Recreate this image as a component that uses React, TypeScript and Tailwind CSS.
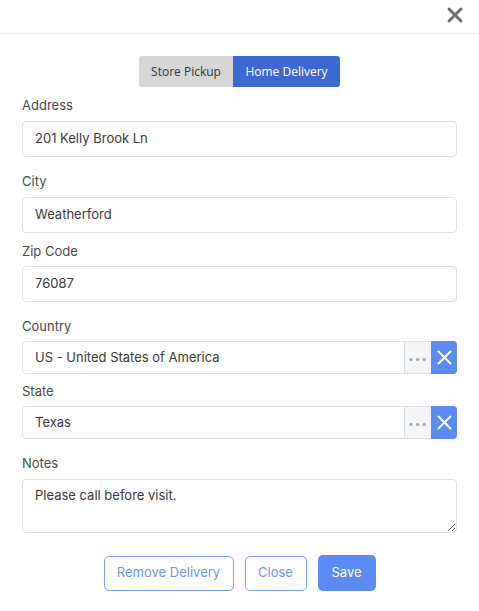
import { X } from "lucide-react"

const FONT = { fontFamily: "Inter, 'Noto Sans', sans-serif" }

function Label({ children }: { children: React.ReactNode }) {
  return <div className="text-[13px] leading-[18px] text-[#4a4a4a]">{children}</div>
}

function TextField({ value }: { value: string }) {
  return (
    <div className="flex h-[36px] items-center rounded-[4px] border border-[#dde0e6] bg-white px-[12px] text-[13px] text-[#3a3a3a]">
      {value}
    </div>
  )
}

function LookupField({ value }: { value: string }) {
  return (
    <div className="flex h-[33px] items-stretch rounded-[4px] border border-[#dde0e6] bg-white">
      <div className="flex flex-1 items-center px-[12px] text-[13px] text-[#3a3a3a]">{value}</div>
      <div className="flex w-[27px] items-center justify-center border-l border-[#dde0e6] bg-[#f4f5f7] text-[#a0a4ab]">
        <span className="text-[10px] leading-none tracking-[1px]">•••</span>
      </div>
      <button className="-my-px -mr-px flex w-[26px] items-center justify-center rounded-r-[4px] bg-[#5b8cf4] text-white">
        <svg width="15" height="15" viewBox="0 0 15 15" fill="none" stroke="currentColor" strokeWidth="2" strokeLinecap="round">
          <path d="M1.5 1.5l12 12M13.5 1.5l-12 12" />
        </svg>
      </button>
    </div>
  )
}

export default function App() {
  return (
    <div className="h-[611px] w-[479px] bg-white" style={FONT}>
      <div className="flex h-[34px] items-center justify-end border-b border-[#eceef2] pb-[4px] pr-[12px]">
        <X className="h-[24px] w-[24px] text-[#6b6f7a]" strokeWidth={2.9} />
      </div>

      <div className="px-[22px]">
        <div className="mt-[22px] flex justify-center" style={{ fontFamily: "'Open Sans', sans-serif" }}>
          <div className="flex h-[31px] overflow-hidden rounded-[3px] text-[12px]">
            <div className="flex w-[94px] items-center justify-center bg-[#d6d6d6] text-[#333]">Store Pickup</div>
            <div className="flex w-[107px] items-center justify-center bg-[#3d67d3] text-white">Home Delivery</div>
          </div>
        </div>

        <div className="mt-[9px]">
          <Label>Address</Label>
          <div className="mt-[7px]">
            <TextField value="201 Kelly Brook Ln" />
          </div>
        </div>

        <div className="mt-[15px]">
          <Label>City</Label>
          <div className="mt-[7px]">
            <TextField value="Weatherford" />
          </div>
        </div>

        <div className="mt-[9px]">
          <Label>Zip Code</Label>
          <div className="mt-[6px]">
            <TextField value="76087" />
          </div>
        </div>

        <div className="mt-[15px]">
          <Label>Country</Label>
          <div className="mt-[6px]">
            <LookupField value="US - United States of America" />
          </div>
        </div>

        <div className="mt-[8px]">
          <Label>State</Label>
          <div className="mt-[6px]">
            <LookupField value="Texas" />
          </div>
        </div>

        <div className="mt-[15px]">
          <Label>Notes</Label>
          <textarea
            className="mt-[7px] block h-[54px] w-full resize-y rounded-[4px] border border-[#dde0e6] px-[12px] py-[6px] text-[13px] text-[#3a3a3a] outline-none"
            defaultValue="Please call before visit."
          />
        </div>

        <div className="mt-[22px] flex items-center justify-center gap-[11px] text-[13px]">
          <button className="h-[35px] w-[130px] rounded-[5px] border border-[#7ba2f5] text-[#6d96ee]">Remove Delivery</button>
          <button className="h-[35px] w-[62px] rounded-[5px] border border-[#7ba2f5] text-[#6d96ee]">Close</button>
          <button className="h-[36px] w-[58px] rounded-[5px] bg-[#5b8cf5] text-white">Save</button>
        </div>
      </div>
    </div>
  )
}
